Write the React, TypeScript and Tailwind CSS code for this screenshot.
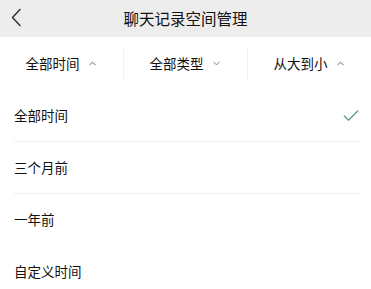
import { ChevronUp, ChevronDown, Check } from "lucide-react";

const font = { fontFamily: '"Noto Sans CJK SC", "Noto Sans", sans-serif' };

const filters = [
  { label: "全部时间", up: true },
  { label: "全部类型", up: false },
  { label: "从大到小", up: true },
];

const options = [
  { label: "全部时间", checked: true, line: true },
  { label: "三个月前", checked: false, line: true },
  { label: "一年前", checked: false, line: false },
  { label: "自定义时间", checked: false, line: false },
];

const App = () => {
  return (
    <div className="w-[371px] h-[289px] overflow-hidden bg-white text-[#111]" style={font}>
      <div className="relative h-[37px] bg-[#ededed] flex items-center justify-center">
        <svg
          className="absolute left-[11px] top-[8px]"
          width="11"
          height="19"
          viewBox="0 0 11 19"
          fill="none"
          stroke="#333"
          strokeWidth="1.5"
          strokeLinecap="round"
          strokeLinejoin="round"
        >
          <polyline points="9,1.5 1.5,9.5 9,17.5" />
        </svg>
        <span className="text-[15.5px] leading-none">聊天记录空间管理</span>
      </div>
      <div className="h-[53px] flex items-center">
        {filters.map((f, i) => (
          <div
            key={f.label}
            className={`flex-1 h-[35px] flex items-center justify-center gap-[7px] ${
              i < 2 ? "border-r border-[#f4f4f4]" : ""
            }`}
          >
            <span className="text-[13.5px] leading-none">{f.label}</span>
            {f.up ? (
              <ChevronUp className="w-[11px] h-[11px] text-[#555]" strokeWidth={2} />
            ) : (
              <ChevronDown className="w-[11px] h-[11px] text-[#777]" strokeWidth={2} />
            )}
          </div>
        ))}
      </div>
      <div className="flex flex-col">
        {options.map((o) => (
          <div key={o.label} className="pl-[14px] pr-[10px]">
            <div
              className={`h-[52px] flex items-center justify-between ${
                o.line ? "border-b border-[#efefef]" : ""
              }`}
            >
              <span className="text-[13.5px] leading-none">{o.label}</span>
              {o.checked && (
                <Check className="w-[20px] h-[20px] text-[#5a9f7c]" strokeWidth={1.6} />
              )}
            </div>
          </div>
        ))}
      </div>
    </div>
  );
};

export default App;
